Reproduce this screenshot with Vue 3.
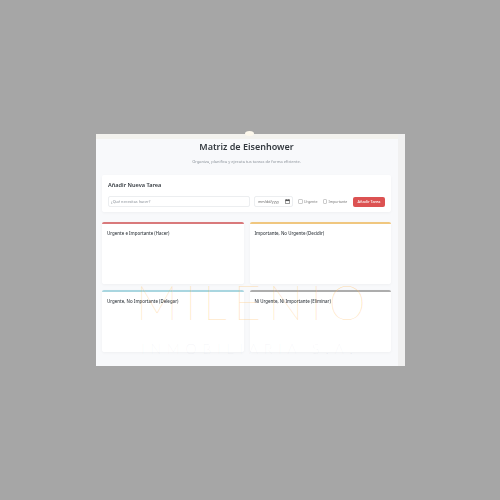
<template>
  <div class="screen">
    <div class="window">
      <div class="page">
        <div class="top-strip"></div>
        <h1 class="title">Matriz de Eisenhower</h1>
        <p class="subtitle">Organiza, planifica y ejecuta tus tareas de forma eficiente.</p>

        <div class="card add-card">
          <h2 class="add-title">Añadir Nueva Tarea</h2>
          <div class="add-row">
            <input class="task-input" type="text" placeholder="¿Qué necesitas hacer?" />
            <div class="date-box">
              <span>mm/dd/yyyy</span>
              <svg width="5" height="5" viewBox="0 0 12 12">
                <path d="M1 2h10v9H1z M3 0v3 M9 0v3" fill="none" stroke="#555" stroke-width="1.5" />
                <path d="M1 2h10v3H1z" fill="#555" />
              </svg>
            </div>
            <label class="check"><span class="box"></span>Urgente</label>
            <label class="check"><span class="box"></span>Importante</label>
            <button class="add-btn">Añadir Tarea</button>
          </div>
        </div>

        <div class="matrix">
          <div v-for="q in quadrants" :key="q.title" class="card quadrant" :class="q.color">
            <h3 class="q-title">{{ q.title }}</h3>
          </div>
        </div>
      </div>
      <div class="scroll-track"></div>
      <div class="watermark">
        <div class="wm-main">MILENIO</div>
        <div class="wm-sub">INMOBILIARIA S.A.</div>
      </div>
      <div class="notch"></div>
    </div>
  </div>
</template>

<script setup>
const quadrants = [
  { title: "Urgente e Importante (Hacer)", color: "red" },
  { title: "Importante, No Urgente (Decidir)", color: "orange" },
  { title: "Urgente, No Importante (Delegar)", color: "blue" },
  { title: "Ni Urgente, Ni Importante (Eliminar)", color: "grey" },
];
</script>

<style scoped>
.screen {
  width: 500px;
  height: 500px;
  background: #a6a6a6;
  padding: 134px 95px 134px 96px;
  box-sizing: border-box;
  font-family: "Noto Sans", "Liberation Sans", sans-serif;
  overflow: hidden;
}

.window {
  position: relative;
  display: flex;
  height: 232px;
  background: #f8f9fb;
}

.page {
  flex: 1;
  padding: 0 7px 0 6px;
  min-width: 0;
  filter: blur(0.45px);
}

.top-strip {
  height: 5px;
  margin: 0 -7px 0 -6px;
  background: #f3f2ee;
}

.title {
  margin: 1px 0 0;
  text-align: center;
  font-size: 9px;
  line-height: 13px;
  font-weight: 600;
  color: #343a40;
}

.subtitle {
  margin: 5px 0 0;
  text-align: center;
  font-size: 4px;
  line-height: 7px;
  color: #8b929a;
}

.card {
  background: #fff;
  border-radius: 2px;
  box-shadow: 0 1px 3px rgba(0, 0, 0, 0.04);
}

.add-card {
  margin-top: 10px;
  height: 37px;
  padding: 6px 6px 0;
  box-sizing: border-box;
}

.add-title {
  margin: 0;
  font-size: 5.6px;
  line-height: 8px;
  font-weight: 600;
  color: #343a40;
}

.add-row {
  display: flex;
  align-items: center;
  margin-top: 7px;
}

.task-input {
  width: 142px;
  height: 11px;
  padding: 0 2px;
  box-sizing: border-box;
  border: 1px solid #eceef0;
  border-radius: 2px;
  font-family: inherit;
  font-size: 3.8px;
  outline: none;
}

.task-input::placeholder {
  color: #8b929a;
}

.date-box {
  display: flex;
  align-items: center;
  justify-content: space-between;
  width: 39px;
  height: 11px;
  margin-left: 4px;
  padding: 0 2px 0 3px;
  box-sizing: border-box;
  border: 1px solid #eceef0;
  border-radius: 2px;
  font-size: 3.6px;
  color: #666;
}

.check {
  display: flex;
  align-items: center;
  gap: 1.5px;
  margin-left: 5px;
  font-size: 3.5px;
  color: #777;
}

.box {
  width: 2.5px;
  height: 2.5px;
  border: 0.5px solid #ccc;
  border-radius: 1px;
}

.add-btn {
  width: 32px;
  height: 10px;
  margin-left: auto;
  padding: 0;
  border: none;
  border-radius: 2px;
  background: #dc5252;
  color: #fff;
  font-family: inherit;
  font-size: 3.8px;
  font-weight: 500;
}

.matrix {
  display: grid;
  grid-template-columns: 1fr 1fr;
  grid-template-rows: 62px 62px;
  column-gap: 6px;
  row-gap: 6px;
  margin-top: 10px;
}

.quadrant {
  padding: 6px 5px 0;
  border-top: 2px solid #ccc;
  box-sizing: border-box;
}

.red { border-top-color: #d9797b; }
.orange { border-top-color: #f0c77f; }
.blue { border-top-color: #a9d6e0; }
.grey { border-top-color: #adadad; }

.q-title {
  margin: 0;
  font-size: 4.4px;
  line-height: 6px;
  font-weight: 500;
  color: #343a40;
}

.scroll-track {
  width: 7px;
  background: #f1f1f1;
}

.watermark {
  position: absolute;
  left: 40px;
  top: 144px;
  width: 228px;
  text-align: center;
  pointer-events: none;
  font-family: "Lato", sans-serif;
}

.wm-main {
  font-size: 47px;
  line-height: 48px;
  font-weight: 100;
  letter-spacing: 7px;
  color: rgba(255, 190, 100, 0.5);
  white-space: nowrap;
}

.wm-sub {
  margin-top: 15px;
  font-size: 14px;
  line-height: 16px;
  font-weight: 100;
  letter-spacing: 6px;
  color: rgba(200, 200, 215, 0.4);
  white-space: nowrap;
}

.notch {
  position: absolute;
  left: 149px;
  top: -3px;
  width: 9px;
  height: 5px;
  border-radius: 50%;
  background: #fdf8ec;
}
</style>
